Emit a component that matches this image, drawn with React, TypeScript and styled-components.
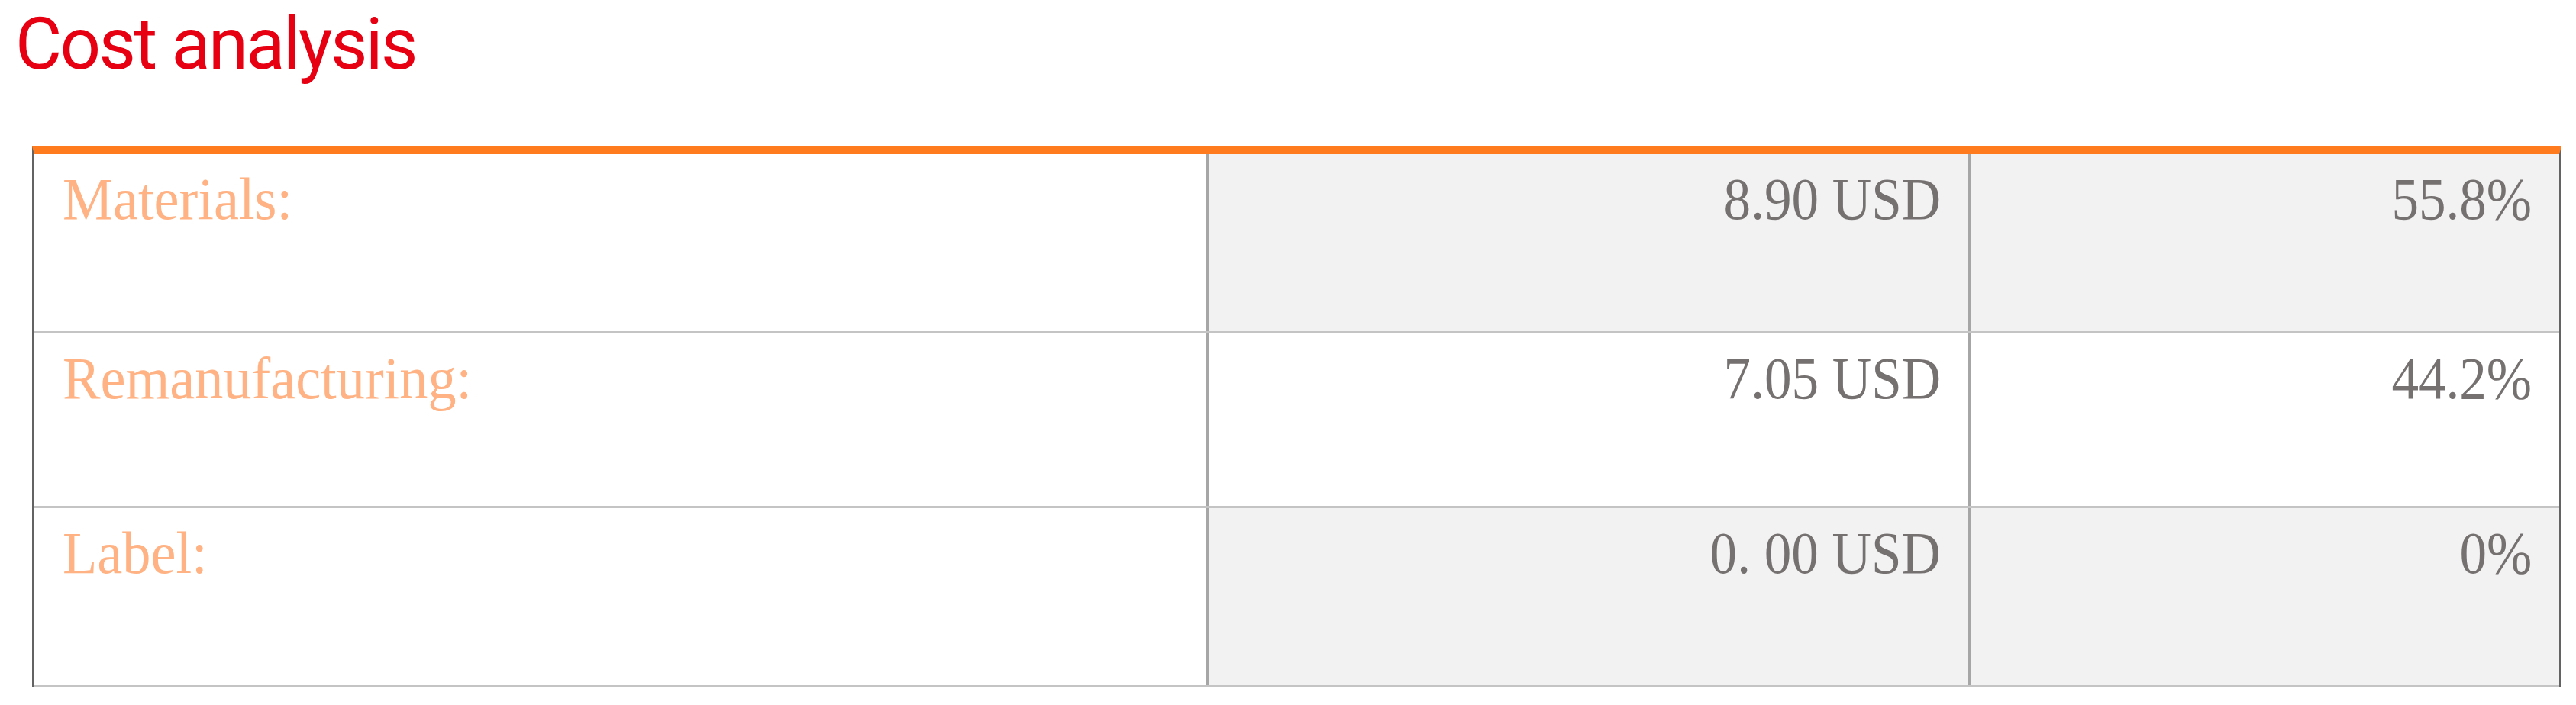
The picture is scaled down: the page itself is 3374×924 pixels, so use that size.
import React from "react";
import styled, { createGlobalStyle } from "styled-components";

const GlobalStyle = createGlobalStyle`
    html, body {
        margin: 0;
        padding: 0;
        background: #ffffff;
    }
`;

type CostRow = {
    label: string;
    amount: string;
    share: string;
    shaded: boolean;
};

const rows: CostRow[] = [
    { label: "Materials:", amount: "8.90 USD", share: "55.8%", shaded: true },
    { label: "Remanufacturing:", amount: "7.05 USD", share: "44.2%", shaded: false },
    { label: "Label:", amount: "0. 00 USD", share: "0%", shaded: true },
];

const rowHeights = [232, 226, 232];

// Styled Components
const Page = styled.div`
    padding-top: 11px;
    width: 3374px;
`;

const Title = styled.h1`
    margin: 0 0 0 20px;
    font-family: Roboto, "Liberation Sans", sans-serif;
    font-weight: 400;
    font-size: 94px;
    line-height: 94px;
    letter-spacing: -2.6px;
    color: #e60012;
`;

const Table = styled.div`
    margin: 87px 0 0 42px;
    width: 3313px;
    box-sizing: border-box;
    border-top: 10px solid #ff7b1e;
    border-left: 3px solid #636363;
    border-right: 3px solid #636363;
    display: flex;
    flex-direction: column;
`;

const Row = styled.div<{ $height: number }>`
    display: grid;
    grid-template-columns: 1534px 999px 1fr;
    height: ${(p) => p.$height}px;
    border-bottom: 3px solid #c4c4c4;
`;

const LabelCell = styled.div`
    box-sizing: border-box;
    padding: 19px 0 0 37px;
    background: #ffffff;
`;

const ValueCell = styled.div<{ $shaded: boolean }>`
    box-sizing: border-box;
    padding: 19px 36px 0 0;
    text-align: right;
    background: ${(p) => (p.$shaded ? "#f2f2f2" : "#ffffff")};
    border-left: 4px solid #a6a6a6;
`;

const Text = styled.span`
    display: inline-block;
    font-family: "Liberation Serif", "Times New Roman", serif;
    font-size: 79px;
    line-height: 79px;
    white-space: pre;
`;

const LabelText = styled(Text)`
    color: #ffb283;
    transform: scaleX(0.94);
    transform-origin: 0 50%;
`;

const ValueText = styled(Text)`
    color: #767171;
    transform: scaleX(0.9);
    transform-origin: 100% 50%;
`;

export default function App() {
    return (
        <>
            <GlobalStyle />
            <Page>
                <Title>Cost analysis</Title>
                <Table>
                    {rows.map((row, i) => (
                        <Row key={row.label} $height={rowHeights[i]}>
                            <LabelCell>
                                <LabelText>{row.label}</LabelText>
                            </LabelCell>
                            <ValueCell $shaded={row.shaded}>
                                <ValueText>{row.amount}</ValueText>
                            </ValueCell>
                            <ValueCell $shaded={row.shaded}>
                                <ValueText>{row.share}</ValueText>
                            </ValueCell>
                        </Row>
                    ))}
                </Table>
            </Page>
        </>
    );
}
